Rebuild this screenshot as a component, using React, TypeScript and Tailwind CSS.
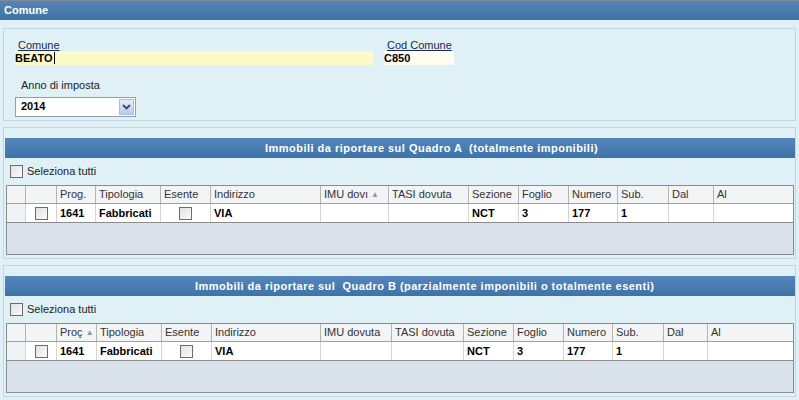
import React from "react";

type Col = { label: string; w: string; sort?: boolean };

const colsA: Col[] = [
	{ label: "", w: "19px" },
	{ label: "", w: "31px" },
	{ label: "Prog.", w: "39px" },
	{ label: "Tipologia", w: "65px" },
	{ label: "Esente", w: "50px" },
	{ label: "Indirizzo", w: "110px" },
	{ label: "IMU dovı", w: "68px", sort: true },
	{ label: "TASI dovuta", w: "80px" },
	{ label: "Sezione", w: "50px" },
	{ label: "Foglio", w: "50px" },
	{ label: "Numero", w: "49px" },
	{ label: "Sub.", w: "51px" },
	{ label: "Dal", w: "45px" },
	{ label: "Al", w: "81px" },
];

const colsB: Col[] = [
	{ label: "", w: "19px" },
	{ label: "", w: "31px" },
	{ label: "Proç", w: "40px", sort: true },
	{ label: "Tipologia", w: "65px" },
	{ label: "Esente", w: "50px" },
	{ label: "Indirizzo", w: "109px" },
	{ label: "IMU dovuta", w: "71px" },
	{ label: "TASI dovuta", w: "72px" },
	{ label: "Sezione", w: "50px" },
	{ label: "Foglio", w: "50px" },
	{ label: "Numero", w: "49px" },
	{ label: "Sub.", w: "51px" },
	{ label: "Dal", w: "44px" },
	{ label: "Al", w: "87px" },
];

function Check() {
	return (
		<span className="inline-block h-[13px] w-[13px] border border-[#6d6d6d] bg-gradient-to-br from-[#e2e2e2] to-[#fbfbfb]" />
	);
}

function Grid({ cols }: { cols: Col[] }) {
	const row = ["", "check", "1641", "Fabbricati", "check", "VIA", "", "", "NCT", "3", "177", "1", "", ""];
	return (
		<div className="ml-[2px] mr-px border border-[#8c8c8c] bg-[#d9e2ea]">
			<div className="flex h-[18px] border-b border-[#a0a0a0] bg-[#f2f4f5]">
				{cols.map((c, i) => (
					<div
						key={i}
						style={{ width: c.w }}
						className="flex shrink-0 items-center gap-[3px] overflow-hidden whitespace-nowrap border-r border-[#b4b4b4] pl-[3px] text-[#333] last:border-r-0"
					>
						<span>{c.label}</span>
						{c.sort && <span className="text-[8px] text-[#8f99a5]">▲</span>}
					</div>
				))}
			</div>
			<div className="flex h-[19px] border-b border-[#8c8c8c] bg-white">
				{cols.map((c, i) => (
					<div
						key={i}
						style={{ width: c.w }}
						className={
							"flex shrink-0 items-center overflow-hidden whitespace-nowrap border-r border-[#d4d4d4] font-bold text-black last:border-r-0 " +
							(row[i] === "check" ? "justify-center " : "pl-[3px] ") +
							(i === 0 ? "bg-[#eef3f6]" : "")
						}
					>
						{row[i] === "check" ? <Check /> : row[i]}
					</div>
				))}
			</div>
			<div className="h-[31px]" />
		</div>
	);
}

function Section({ title, cols, titleClass }: { title: string; cols: Col[]; titleClass: string }) {
	return (
		<div className="mx-[3px] border border-[#c4d6dd] pb-[3px] pt-[10px]">
			<div className="ml-[1px] flex h-[20px] items-center bg-gradient-to-b from-[#5486bb] to-[#3f73a8] font-bold whitespace-pre text-white">
				<span className={titleClass}>{title}</span>
			</div>
			<div className="flex h-[27px] items-center gap-[4px] pl-[6px]">
				<Check />
				<span className="text-[#222]">Seleziona tutti</span>
			</div>
			<Grid cols={cols} />
		</div>
	);
}

export default function App() {
	return (
		<div className="h-[400px] w-[799px] overflow-hidden bg-[#dff1f6] text-[11px] font-['Liberation_Sans',Arial,sans-serif]">
			<div className="flex h-[20px] items-center border-t border-[#7b8a97] bg-gradient-to-b from-[#5683b5] to-[#3f72a4] pl-[4px] font-bold text-white">
				Comune
			</div>
			<div className="mx-[3px] mt-[8px] h-[93px] border border-[#c4d6dd] pl-[11px] pt-[10px]">
				<div className="flex">
					<div className="w-[369px]">
						<div className="pl-[3px] leading-[12px] text-[#1c2a52] underline">Comune</div>
						<div className="flex h-[14px] w-[358px] items-center bg-[#fbfbc9] font-bold text-black">
							BEATO<span className="ml-[1px] h-[12px] w-px bg-black" />
						</div>
					</div>
					<div>
						<div className="pl-[3px] leading-[12px] text-[#1c2a52] underline">Cod Comune</div>
						<div className="flex h-[14px] w-[70px] items-center bg-[#fffdf0] font-bold text-black">C850</div>
					</div>
				</div>
				<div className="mt-[12px] pl-[6px] text-[#222]">Anno di imposta</div>
				<div className="mt-[3px] flex h-[20px] w-[121px] items-center border border-[#8ba0b5] bg-white pl-[5px] font-bold">
					<span className="flex-1">2014</span>
					<span className="mr-[1px] flex h-[16px] w-[15px] items-center justify-center border border-[#a8bed6] bg-gradient-to-b from-[#e6eefa] to-[#b9cce6]">
						<svg width="9" height="6" viewBox="0 0 9 6">
							<path d="M1 1l3.5 3.5L8 1" fill="none" stroke="#2b4a7a" strokeWidth="1.8" />
						</svg>
					</span>
				</div>
			</div>
			<div className="mt-[6px]">
				<Section
					title="Immobili da riportare sul Quadro A  (totalmente imponibili)"
					titleClass="pl-[260px] tracking-[0.48px]"
					cols={colsA}
				/>
			</div>
			<div className="mt-[6px]">
				<Section
					title="Immobili da riportare sul  Quadro B (parzialmente imponibili o totalmente esenti)"
					titleClass="pl-[190px] tracking-[0.48px]"
					cols={colsB}
				/>
			</div>
		</div>
	);
}
